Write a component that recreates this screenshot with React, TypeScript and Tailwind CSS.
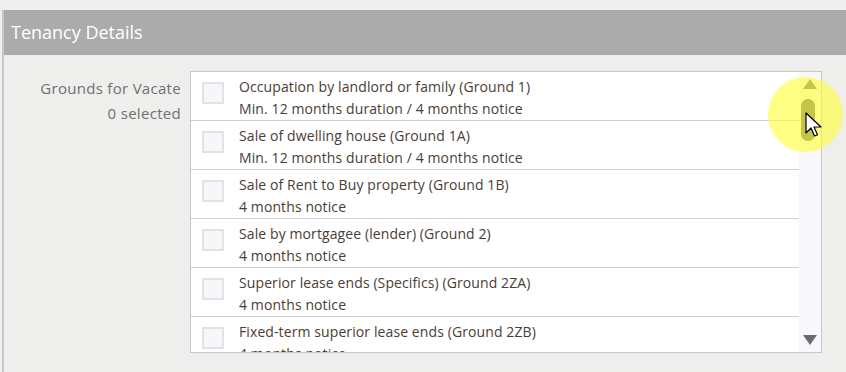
import React from "react";

const items = [
  ["Occupation by landlord or family (Ground 1)", "Min. 12 months duration / 4 months notice"],
  ["Sale of dwelling house (Ground 1A)", "Min. 12 months duration / 4 months notice"],
  ["Sale of Rent to Buy property (Ground 1B)", "4 months notice"],
  ["Sale by mortgagee (lender) (Ground 2)", "4 months notice"],
  ["Superior lease ends (Specifics) (Ground 2ZA)", "4 months notice"],
  ["Fixed-term superior lease ends (Ground 2ZB)", "4 months notice"],
];

export default function App() {
  return (
    <div
      className="w-[846px] h-[372px] bg-[#eeeeee] pt-[10px] overflow-hidden"
      style={{ fontFamily: '"Open Sans", "Noto Sans", sans-serif' }}
    >
      <div className="ml-[2px] h-[362px] border-l-2 border-[#c8c8c8] bg-[#eeeeec]">
        <div className="h-[45px] bg-[#ababab] flex items-center pl-[7px] text-white text-[18px] tracking-[0px]">
          Tenancy Details
        </div>
        <div className="flex pt-[16px]">
          <div className="w-[186px] pr-[9px] pt-[5px] text-right text-[#707070] text-[15px] leading-[25px] tracking-[0.3px]">
            <div>Grounds for Vacate</div>
            <div>0 selected</div>
          </div>
          <div className="relative w-[632px] h-[282px] border border-[#c9c9c9] bg-white flex">
            <div className="flex-1 overflow-hidden">
              {items.map(([a, b], i) => (
                <div key={i} className="h-[49px] border-b border-[#cfcfcf] flex items-start">
                  <div className="ml-[11px] mt-[10px] w-[22px] h-[22px] border-2 border-[#e2e2e2] bg-[#f6f7fb] rounded-[1px]" />
                  <div className="ml-[15px] pt-[4px] text-[14px] leading-[22px] text-[#4a3d34] tracking-[0.1px]">
                    <div>{a}</div>
                    <div>{b}</div>
                  </div>
                </div>
              ))}
            </div>
            <div className="w-[22px] h-full bg-[#f8f8fc] relative">
              <svg className="absolute left-[3px] top-[6px]" width="16" height="12" viewBox="0 0 16 12">
                <path d="M8 1 L15 11 L1 11 Z" fill="#6b6b6b" />
              </svg>
              <div className="absolute left-[2px] top-[27px] w-[14px] h-[42px] rounded-full bg-[#6b6b6b]" />
              <svg className="absolute left-[3px] bottom-[6px]" width="16" height="12" viewBox="0 0 16 12">
                <path d="M1 1 L15 1 L8 11 Z" fill="#6b6b6b" />
              </svg>
            </div>
            <div className="absolute left-[577px] top-[5px] w-[75px] h-[75px] rounded-full bg-[#ffff33]/60 pointer-events-none" />
            <svg className="absolute left-[614px] top-[40px]" width="18" height="28" viewBox="0 0 18 28">
              <path
                d="M1 1 L1 21 L6 16 L9.5 24 L12.5 22.8 L9 15 L16 15 Z"
                fill="white"
                stroke="black"
                strokeWidth="1.2"
                strokeLinejoin="round"
              />
            </svg>
          </div>
        </div>
      </div>
    </div>
  );
}
